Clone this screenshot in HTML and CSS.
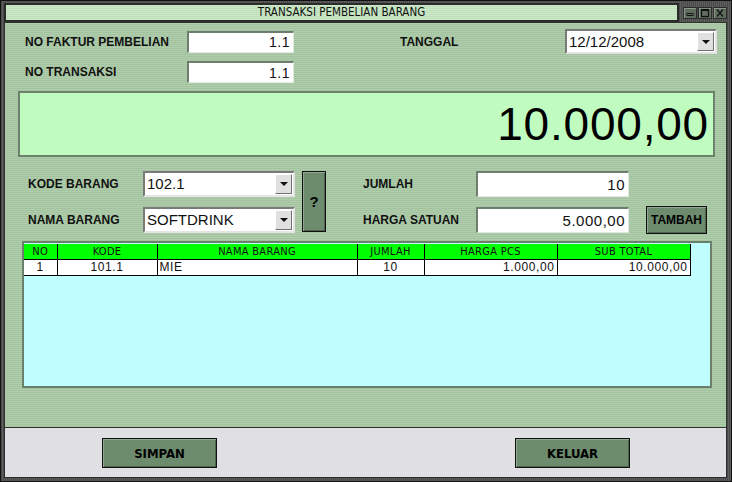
FILE: index.html
```html
<!DOCTYPE html>
<html>
<head>
<meta charset="utf-8">
<link rel="stylesheet" href="styles.css">
</head>
<body>
<div class="window">
  <div class="titlebar">
    <div class="title">TRANSAKSI PEMBELIAN BARANG</div>
    <div class="ctrls">
      <span class="ctrl"><svg width="12" height="10" viewBox="0 0 12 10"><rect x="3" y="5.5" width="6" height="2" fill="none" stroke="#111" stroke-width="1"/></svg></span>
      <span class="ctrl"><svg width="12" height="10" viewBox="0 0 12 10"><rect x="2.5" y="1.5" width="7" height="7" fill="none" stroke="#111" stroke-width="1.2"/><line x1="2.5" y1="2.5" x2="9.5" y2="2.5" stroke="#111" stroke-width="1"/></svg></span>
      <span class="ctrl"><svg width="12" height="10" viewBox="0 0 12 10"><path d="M3 1.5 L9 8.5 M9 1.5 L3 8.5" stroke="#111" stroke-width="1.2" fill="none"/></svg></span>
    </div>
  </div>
  <div class="main">
    <div class="hdr-row first">
      <span class="lbl lbl-hdr">NO FAKTUR PEMBELIAN</span>
      <div class="input input-hdr">1.1</div>
      <span class="lbl lbl-tgl">TANGGAL</span>
      <div class="combo combo-date"><span class="val">12/12/2008</span><span class="drop"><i></i></span></div>
    </div>
    <div class="hdr-row second">
      <span class="lbl lbl-hdr">NO TRANSAKSI</span>
      <div class="input input-hdr">1.1</div>
    </div>
    <div class="display">10.000,00</div>
    <div class="entry">
      <span class="lbl e-lbl1 r1">KODE BARANG</span>
      <div class="combo e-combo r1"><span class="val">102.1</span><span class="drop"><i></i></span></div>
      <span class="lbl e-lbl1 r2">NAMA BARANG</span>
      <div class="combo e-combo r2"><span class="val">SOFTDRINK</span><span class="drop"><i></i></span></div>
      <button class="btn btn-q">?</button>
      <span class="lbl e-lbl2 r1">JUMLAH</span>
      <div class="input e-input r1">10</div>
      <span class="lbl e-lbl2 r2">HARGA SATUAN</span>
      <div class="input e-input r2">5.000,00</div>
      <button class="btn btn-tambah">TAMBAH</button>
    </div>
    <div class="panel">
      <table class="grid">
        <thead>
          <tr>
            <th class="c-no">NO</th>
            <th class="c-kode">KODE</th>
            <th class="c-nama">NAMA BARANG</th>
            <th class="c-jml">JUMLAH</th>
            <th class="c-harga">HARGA PCS</th>
            <th class="c-sub">SUB TOTAL</th>
          </tr>
        </thead>
        <tbody>
          <tr>
            <td class="center">1</td>
            <td class="center">101.1</td>
            <td class="left">MIE</td>
            <td class="center">10</td>
            <td class="right">1.000,00</td>
            <td class="right">10.000,00</td>
          </tr>
        </tbody>
      </table>
    </div>
  </div>
  <div class="footer">
    <button class="btn btn-big btn-simpan">SIMPAN</button>
    <button class="btn btn-big btn-keluar">KELUAR</button>
  </div>
</div>
</body>
</html>
```

FILE: styles.css
```css
* { box-sizing: border-box; }
html, body { margin: 0; padding: 0; }
body {
  width: 732px;
  height: 482px;
  overflow: hidden;
  font-family: "Liberation Sans", Arial, sans-serif;
  background: #3a3a3a;
}

.window {
  width: 732px;
  height: 482px;
  display: flex;
  flex-direction: column;
  border: 1px solid #111;
  padding: 2px 4px 3px 3px;
  background: repeating-linear-gradient(to right, #4a4a4a 0 1px, #5e5e5e 1px 2px);
}

/* title bar */
.titlebar {
  height: 19px;
  display: flex;
  align-items: stretch;
  flex: none;
}
.title {
  width: 675px;
  border: 2px solid #2a2a2a;
  background: repeating-linear-gradient(to bottom, #cbe9c7 0 1px, #bedfba 1px 2px);
  font-family: "Liberation Sans Narrow", "DejaVu Sans Condensed", sans-serif;
  font-size: 11.5px;
  color: #111;
  display: flex;
  align-items: center;
  justify-content: center;
  line-height: 1;
}
.ctrls {
  display: flex;
  align-items: center;
  gap: 1px;
  margin-left: 4px;
}
.ctrl {
  width: 14px;
  height: 12px;
  background: #5f6d5f;
  border: 1px solid #2c2c2c;
  box-shadow: inset 1px 1px 0 #8a9a8a;
  display: flex;
  align-items: center;
  justify-content: center;
}
.ctrl svg { display: block; }

/* main green area */
.main {
  height: 406px;
  flex: none;
  border: 1px solid #2c342c;
  background: repeating-linear-gradient(to bottom, #b1ceac 0 1px, #a3c29f 1px 2px);
  display: flex;
  flex-direction: column;
}

.lbl {
  font-weight: bold;
  font-size: 12px;
  color: #111;
  white-space: nowrap;
}

.hdr-row {
  display: flex;
  align-items: center;
  padding-left: 20px;
}
.hdr-row.first { margin-top: 6px; height: 25px; }
.hdr-row.second { margin-top: 7px; height: 22px; }
.lbl-hdr { width: 162px; }
.lbl-tgl { margin-left: 106px; width: 165px; }

.input {
  background: #fff;
  border-top: 2px solid #6f7f6f;
  border-left: 2px solid #6f7f6f;
  border-right: 1px solid #dfe8df;
  border-bottom: 1px solid #dfe8df;
  font-size: 15px;
  letter-spacing: 0.5px;
  color: #111;
  text-align: right;
  padding-right: 3px;
  display: flex;
  align-items: center;
  justify-content: flex-end;
  line-height: 1;
}
.input-hdr { width: 107px; height: 22px; font-size: 14px; }

.combo {
  background: #fff;
  border-top: 2px solid #7a7a7a;
  border-left: 2px solid #7a7a7a;
  border-right: 2px solid #e4e4e4;
  border-bottom: 2px solid #e4e4e4;
  display: flex;
  align-items: stretch;
  color: #111;
}
.combo .val {
  flex: 1;
  font-size: 15px;
  padding-left: 2px;
  display: flex;
  align-items: center;
  line-height: 1;
}
.combo .drop {
  width: 17px;
  margin: 1px 1px 1px 0;
  background: #e0e0e0;
  border-top: 1px solid #fff;
  border-left: 1px solid #fff;
  border-right: 1px solid #707070;
  border-bottom: 1px solid #707070;
  display: flex;
  align-items: center;
  justify-content: center;
}
.combo .drop i {
  width: 0;
  height: 0;
  border-left: 4px solid transparent;
  border-right: 4px solid transparent;
  border-top: 4px solid #111;
}
.combo-date { width: 152px; height: 25px; }

/* big display */
.display {
  margin-top: 8px;
  margin-left: 13px;
  width: 697px;
  height: 66px;
  background: #c0fcc0;
  border: 2px solid #6c826c;
  font-size: 46px;
  letter-spacing: 0.8px;
  color: #000;
  display: flex;
  align-items: center;
  justify-content: flex-end;
  padding-right: 4px;
  line-height: 1;
}

/* entry grid */
.entry {
  margin-top: 13px;
  padding-left: 23px;
  display: grid;
  grid-template-columns: 115px 152px 7px 24px 37px 113px 153px 17px 61px;
  grid-template-rows: 27px 27px;
  row-gap: 9px;
  align-items: center;
}
.r1 { grid-row: 1; }
.r2 { grid-row: 2; }
.e-lbl1 { grid-column: 1; }
.e-combo { grid-column: 2; height: 26px; }
.btn-q { grid-column: 4; grid-row: 1 / span 2; height: 61px; }
.e-lbl2 { grid-column: 6; }
.e-input { grid-column: 7; height: 26px; }
.btn-tambah { grid-column: 9; grid-row: 2; height: 28px; }

.btn {
  background: #6d8b6d;
  border: 1px solid #111;
  box-shadow: inset 1px 1px 0 #8fa88f, inset -1px -1px 0 #4c644c;
  color: #000;
  font-family: "Liberation Sans", Arial, sans-serif;
  font-weight: bold;
  font-size: 12px;
  padding: 0;
  margin: 0;
}
.btn-q { font-size: 15px; }
.btn-tambah { font-size: 12px; }

/* table panel */
.panel {
  margin-top: 8px;
  margin-left: 17px;
  width: 690px;
  height: 147px;
  background: #c0ffff;
  border: 2px solid #6a806a;
  padding-top: 1px;
}
.grid {
  border-collapse: collapse;
  table-layout: fixed;
  width: 666px;
}
.grid th, .grid td {
  border: 1px solid #000;
  padding: 0 2px;
  line-height: 1;
  white-space: nowrap;
  overflow: hidden;
}
.grid th {
  background: #00ff00;
  height: 15px;
  font-family: "Liberation Sans Narrow", "DejaVu Sans Condensed", sans-serif;
  font-weight: normal;
  font-size: 11px;
  letter-spacing: 0.3px;
  color: #111;
  text-align: center;
  border-top: 0;
}
.grid th:first-child, .grid td:first-child { border-left: 0; }
.grid td {
  background: #fff;
  height: 16px;
  font-size: 12px;
  letter-spacing: 0.6px;
  color: #111;
}
.c-no { width: 33px; }
.c-kode { width: 100px; }
.c-nama { width: 200px; }
.c-jml { width: 67px; }
.c-harga { width: 133px; }
.c-sub { width: 133px; }
.center { text-align: center; }
.left { text-align: left; }
.right { text-align: right; }

/* footer */
.footer {
  height: 50px;
  flex: none;
  background: #e0dfe4;
  border-left: 1px solid #2c2c2c;
  border-right: 1px solid #2c2c2c;
  border-bottom: 1px solid #2c2c2c;
  display: flex;
  align-items: flex-start;
  padding-top: 10px;
}
.btn-big {
  width: 115px;
  height: 30px;
  font-family: "Liberation Sans Narrow", "DejaVu Sans Condensed", sans-serif;
  font-size: 13px;
}
.btn-simpan { margin-left: 97px; }
.btn-keluar { margin-left: 298px; }
```
